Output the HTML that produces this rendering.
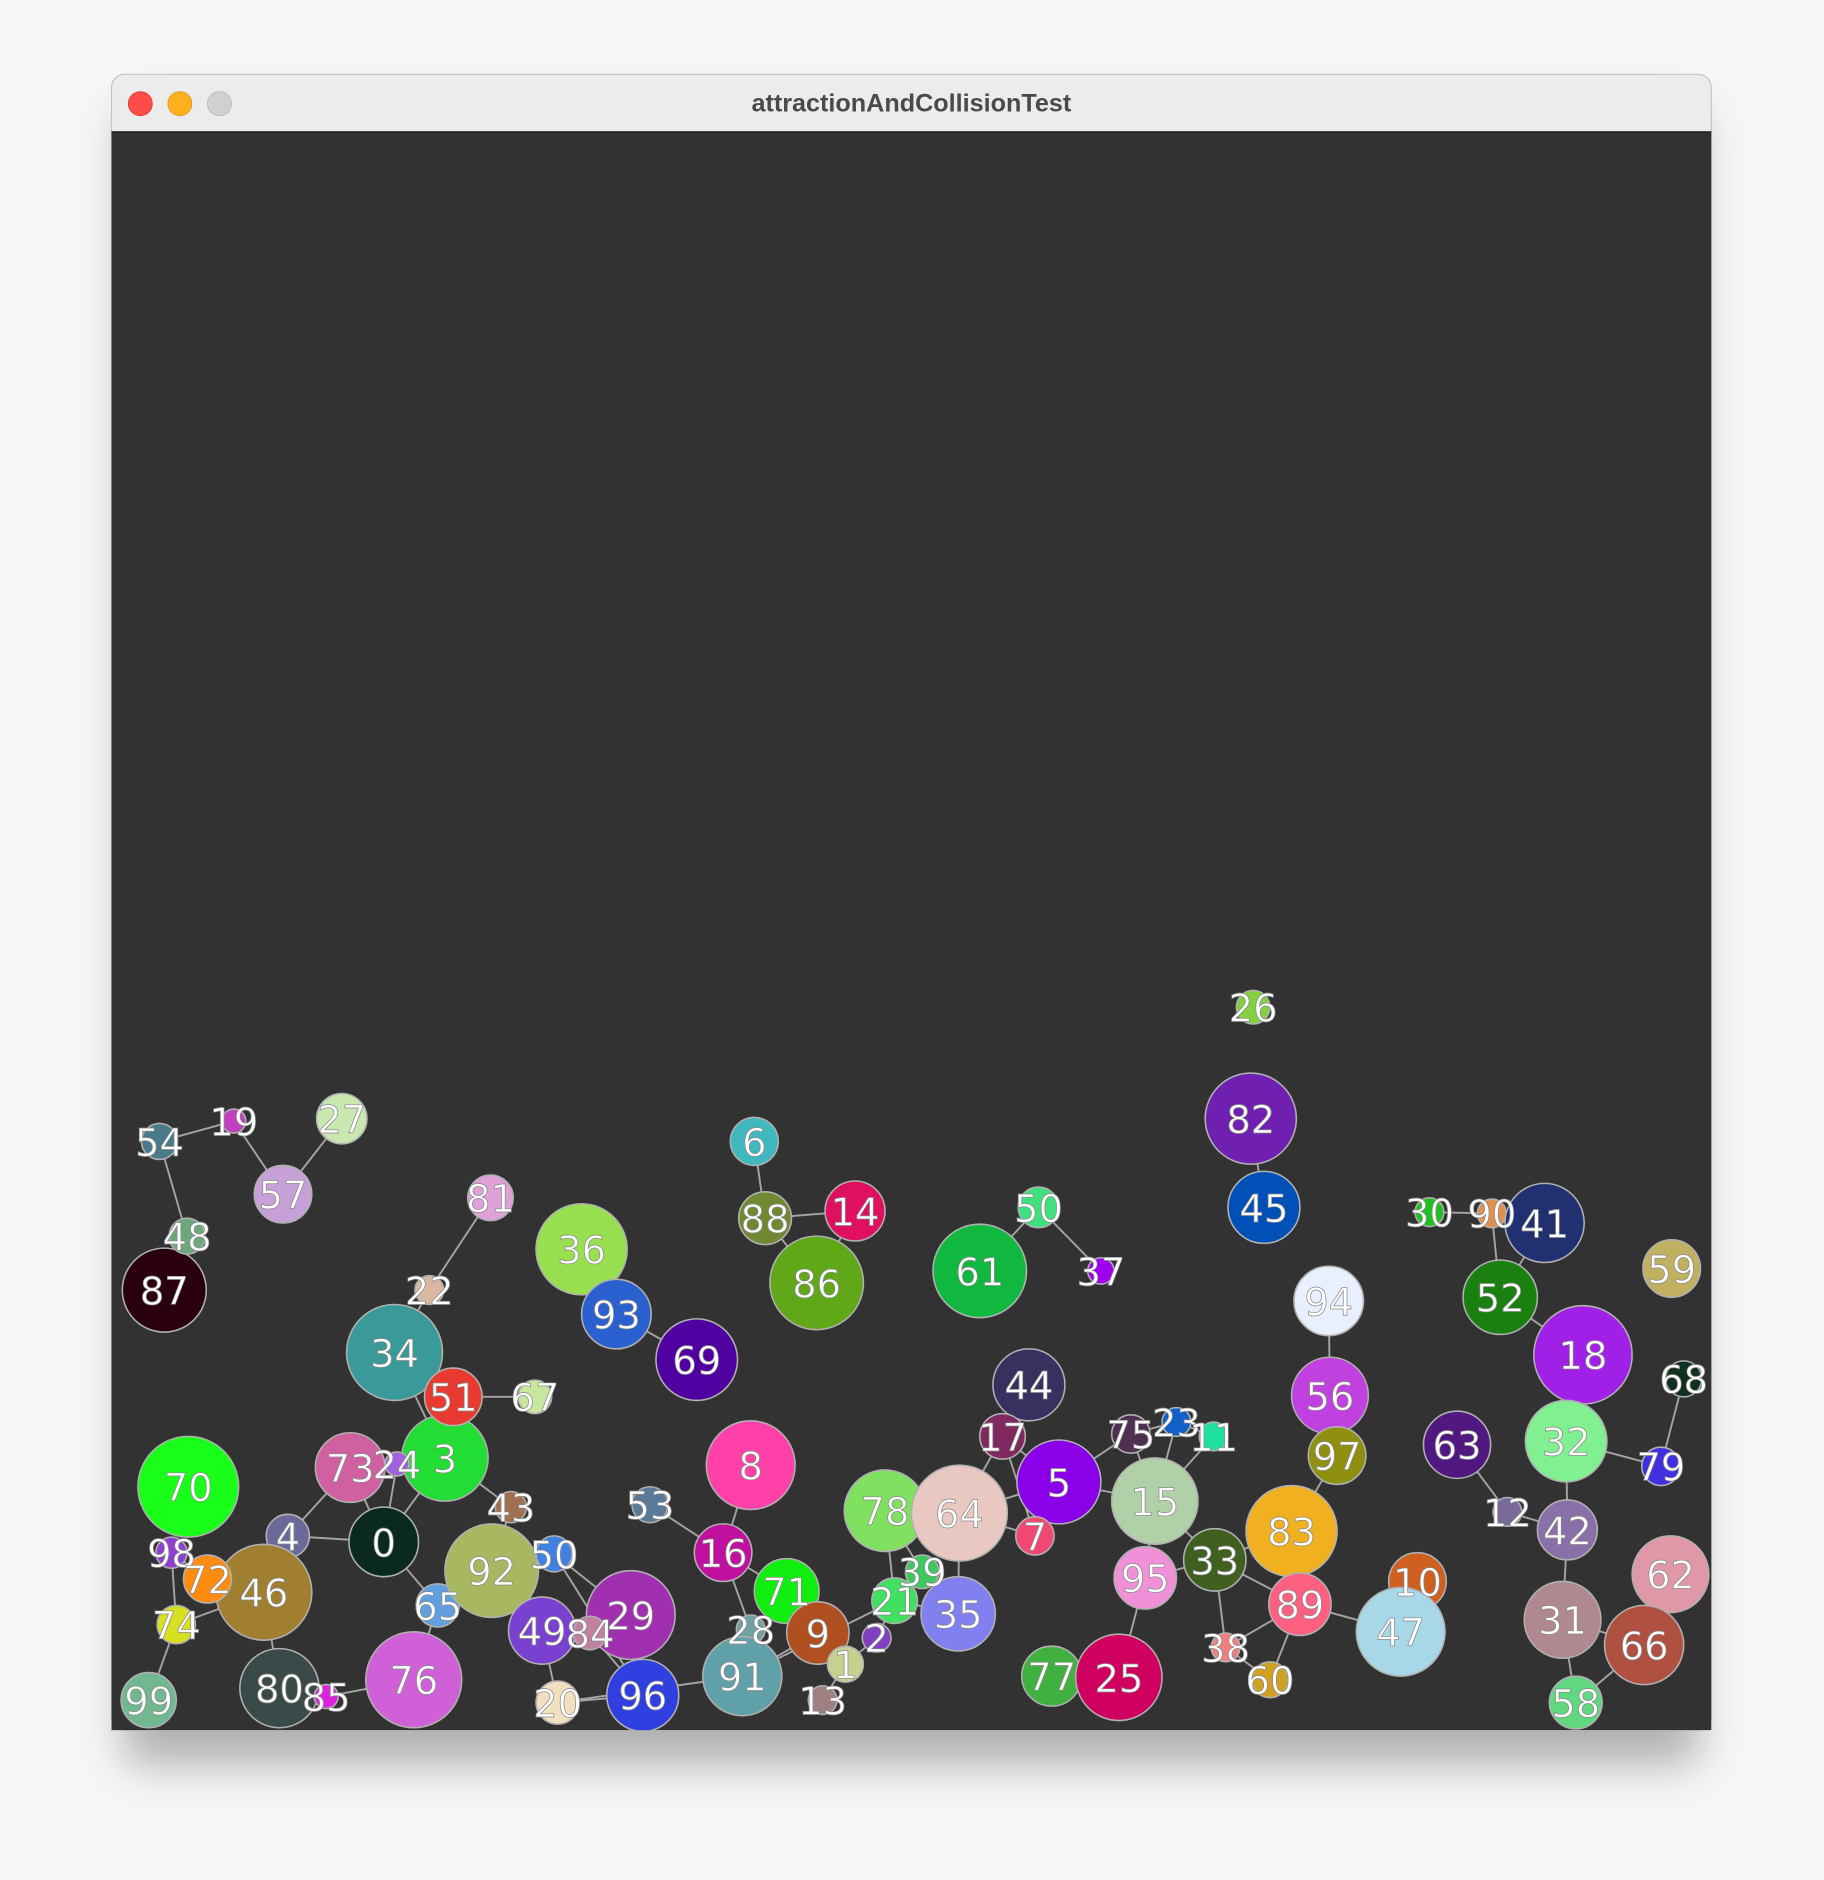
<!DOCTYPE html>
<html><head><meta charset="utf-8"><style>
html,body{margin:0;padding:0;background:#f6f6f6;}
svg{display:block;}
</style></head><body>
<svg width="1824" height="1880" viewBox="0 0 1521 1568" preserveAspectRatio="none" xmlns="http://www.w3.org/2000/svg">
<defs>
<filter id="sh" x="-10%" y="-10%" width="120%" height="125%"><feGaussianBlur stdDeviation="18"/></filter>
<clipPath id="win"><rect x="93" y="110" width="1334" height="1333"/></clipPath>
</defs>
<rect x="0" y="0" width="1527" height="1574" fill="#f6f6f6"/>
<rect x="103" y="92" width="1314" height="1380" rx="14" fill="#000" opacity="0.28" filter="url(#sh)"/>
<rect x="93" y="62" width="1334" height="1381" rx="11" fill="#ececec" stroke="#c4c4c4" stroke-width="1"/>
<rect x="93" y="110" width="1334" height="1333" fill="#323232"/>
<line x1="93" y1="110" x2="1427" y2="110" stroke="#111" stroke-width="1"/>
<circle cx="117" cy="86.5" r="10" fill="#fe4d49" stroke="#df3b37" stroke-width="0.7"/>
<circle cx="150" cy="86.5" r="10" fill="#feb11c" stroke="#e09a17" stroke-width="0.7"/>
<circle cx="183" cy="86.5" r="10" fill="#d0d0d0" stroke="#b8b8b8" stroke-width="0.7"/>
<text x="760" y="93" text-anchor="middle" font-family="Liberation Sans, sans-serif" font-weight="bold" font-size="21" fill="#4a4a4a">attractionAndCollisionTest</text>
<g clip-path="url(#win)">
<g stroke="#b8b8b8" stroke-width="1.6" fill="none" opacity="0.85">
<path d="M137 1076L156 1031L133 952L195 935L236 996L285 933M409 999L358 1076L329 1128L378 1165L446 1165M378 1165L371 1216L329 1128M371 1216L331 1221L292 1224L320 1286L331 1221M292 1224L240 1281L220 1328L173 1317L143 1295L147 1355L124 1418M240 1281L320 1286L365 1339L345 1401L272 1415L233 1408L220 1328M147 1355L220 1328M320 1286L371 1216M410 1310L426 1257L371 1216M410 1310L462 1296L536 1414L465 1420L452 1360L526 1347L492 1362L536 1414M462 1296L526 1347M410 1310L452 1360M465 1420L619 1398L682 1362L705 1388L686 1418M485 1042L514 1096L581 1134M542 1255L603 1295L626 1222M603 1295L656 1327L682 1362M603 1295L626 1359L619 1398M629 952L638 1016L713 1010L681 1070L638 1016M738 1260L800 1262L799 1346L769 1311L746 1335L731 1366L705 1388M738 1260L769 1311L799 1346M738 1260L746 1335M619 1398L746 1335L799 1346M817 1060L866 1007L918 1060M858 1155L836 1198L883 1236L863 1281L836 1198L800 1262L883 1236L963 1252L943 1196L883 1236M800 1262L863 1281M943 1196L981 1186L1012 1198L963 1252L981 1186M963 1252L955 1316L933 1399L877 1398M963 1252L1013 1301L1022 1374L1059 1401L1084 1338L1022 1374M1013 1301L1077 1277L1115 1214L1109 1164L1108 1085M1013 1301L955 1316M1013 1301L1084 1338L1168 1361L1182 1319M1077 1277L1084 1338L1059 1401M1043 933L1054 1007M1192 1011L1244 1012L1288 1020L1251 1082L1244 1012M1251 1082L1320 1130L1306 1202L1307 1276L1303 1351L1314 1420L1371 1372L1393 1313M1215 1205L1257 1261L1307 1276M1303 1351L1371 1372M1404 1150L1385 1223L1306 1202"/>
</g>
<g stroke="#b0b0b0" stroke-width="1.3" fill-opacity="1">
<circle cx="137" cy="1076" r="35" fill="#2a0010"/>
<circle cx="156" cy="1031" r="15" fill="#6da87a"/>
<circle cx="133" cy="952" r="15" fill="#4a7a8a"/>
<circle cx="195" cy="935" r="10" fill="#c040c0"/>
<circle cx="285" cy="933" r="21" fill="#c8e8b0"/>
<circle cx="236" cy="996" r="24" fill="#c8a0d8"/>
<circle cx="409" cy="999" r="19" fill="#e0a0d8"/>
<circle cx="358" cy="1076" r="12" fill="#d8b8a0"/>
<circle cx="329" cy="1128" r="40" fill="#3a9a9a"/>
<circle cx="446" cy="1165" r="14" fill="#c8e8a0"/>
<circle cx="371" cy="1216" r="36" fill="#22dd33"/>
<circle cx="378" cy="1165" r="24" fill="#e83a30"/>
<circle cx="331" cy="1221" r="10" fill="#a060e0"/>
<circle cx="292" cy="1224" r="29" fill="#d060a0"/>
<circle cx="157" cy="1240" r="42" fill="#1aff1a"/>
<circle cx="240" cy="1281" r="18" fill="#6a6a9a"/>
<circle cx="320" cy="1286" r="29" fill="#0a2a20"/>
<circle cx="143" cy="1295" r="13" fill="#9040d0"/>
<circle cx="220" cy="1328" r="40" fill="#a08030"/>
<circle cx="173" cy="1317" r="20" fill="#ff8c10"/>
<circle cx="147" cy="1355" r="16" fill="#d8e020"/>
<circle cx="124" cy="1418" r="23" fill="#70b890"/>
<circle cx="233" cy="1408" r="33" fill="#3a4a48"/>
<circle cx="272" cy="1415" r="10" fill="#e020e0"/>
<circle cx="345" cy="1401" r="40" fill="#d060d8"/>
<circle cx="365" cy="1339" r="18" fill="#60a0e0"/>
<circle cx="410" cy="1310" r="39" fill="#a8b860"/>
<circle cx="426" cy="1257" r="13" fill="#a07050"/>
<circle cx="462" cy="1296" r="15" fill="#4080e0"/>
<circle cx="452" cy="1360" r="28" fill="#7a40d0"/>
<circle cx="526" cy="1347" r="37" fill="#a030b0"/>
<circle cx="492" cy="1362" r="14" fill="#c080a0"/>
<circle cx="465" cy="1420" r="18" fill="#f0e0c0"/>
<circle cx="536" cy="1414" r="30" fill="#3040e0"/>
<circle cx="485" cy="1042" r="38" fill="#98e050"/>
<circle cx="514" cy="1096" r="29" fill="#2a60d0"/>
<circle cx="581" cy="1134" r="34" fill="#5000a0"/>
<circle cx="542" cy="1255" r="15" fill="#5a7a9a"/>
<circle cx="626" cy="1222" r="37" fill="#ff40a8"/>
<circle cx="603" cy="1295" r="24" fill="#c010a0"/>
<circle cx="656" cy="1327" r="27" fill="#10ee10"/>
<circle cx="626" cy="1359" r="12" fill="#70a0a0"/>
<circle cx="619" cy="1398" r="33" fill="#60a0a8"/>
<circle cx="682" cy="1362" r="26" fill="#b05020"/>
<circle cx="705" cy="1388" r="15" fill="#c8d090"/>
<circle cx="686" cy="1418" r="12" fill="#a08080"/>
<circle cx="731" cy="1366" r="12" fill="#8040c0"/>
<circle cx="629" cy="952" r="20" fill="#40b8c0"/>
<circle cx="638" cy="1016" r="22" fill="#708830"/>
<circle cx="713" cy="1010" r="25" fill="#e01060"/>
<circle cx="681" cy="1070" r="39" fill="#60a818"/>
<circle cx="738" cy="1260" r="34" fill="#80e060"/>
<circle cx="800" cy="1262" r="40" fill="#e8c8c0"/>
<circle cx="769" cy="1311" r="14" fill="#40c860"/>
<circle cx="746" cy="1335" r="19" fill="#40e060"/>
<circle cx="799" cy="1346" r="31" fill="#8080f0"/>
<circle cx="817" cy="1060" r="39" fill="#10b840"/>
<circle cx="866" cy="1007" r="17" fill="#40e080"/>
<circle cx="918" cy="1060" r="11" fill="#a000f0"/>
<circle cx="858" cy="1155" r="30" fill="#3a3060"/>
<circle cx="836" cy="1198" r="19" fill="#802860"/>
<circle cx="883" cy="1236" r="35" fill="#8a00e8"/>
<circle cx="863" cy="1281" r="16" fill="#f04870"/>
<circle cx="943" cy="1196" r="16" fill="#503050"/>
<circle cx="963" cy="1252" r="36" fill="#b0d0a8"/>
<circle cx="981" cy="1186" r="12" fill="#1060c8"/>
<circle cx="1012" cy="1198" r="12" fill="#20e0a0"/>
<circle cx="1045" cy="840" r="14" fill="#80d040"/>
<circle cx="1043" cy="933" r="38" fill="#7020b0"/>
<circle cx="1054" cy="1007" r="30" fill="#0050b8"/>
<circle cx="1108" cy="1085" r="29" fill="#e8f0ff"/>
<circle cx="1109" cy="1164" r="32" fill="#c040e0"/>
<circle cx="1115" cy="1214" r="24" fill="#909010"/>
<circle cx="1077" cy="1277" r="38" fill="#f0b020"/>
<circle cx="1013" cy="1301" r="26" fill="#406020"/>
<circle cx="955" cy="1316" r="26" fill="#f090d8"/>
<circle cx="1084" cy="1338" r="26" fill="#ff6080"/>
<circle cx="1022" cy="1374" r="12" fill="#f08080"/>
<circle cx="1059" cy="1401" r="15" fill="#d0a020"/>
<circle cx="877" cy="1398" r="25" fill="#40b040"/>
<circle cx="933" cy="1399" r="36" fill="#d00060"/>
<circle cx="1182" cy="1319" r="24" fill="#d06020"/>
<circle cx="1168" cy="1361" r="37" fill="#a8d8e8"/>
<circle cx="1192" cy="1011" r="12" fill="#20c020"/>
<circle cx="1244" cy="1012" r="12" fill="#e09050"/>
<circle cx="1288" cy="1020" r="33" fill="#203070"/>
<circle cx="1251" cy="1082" r="31" fill="#1a8010"/>
<circle cx="1394" cy="1058" r="24" fill="#c0b060"/>
<circle cx="1320" cy="1130" r="41" fill="#a020e8"/>
<circle cx="1404" cy="1150" r="15" fill="#103020"/>
<circle cx="1215" cy="1205" r="28" fill="#501880"/>
<circle cx="1306" cy="1202" r="34" fill="#80f090"/>
<circle cx="1385" cy="1223" r="16" fill="#4030e0"/>
<circle cx="1257" cy="1261" r="12" fill="#7a6a9a"/>
<circle cx="1307" cy="1276" r="25" fill="#8a70a8"/>
<circle cx="1393" cy="1313" r="32" fill="#e098a8"/>
<circle cx="1303" cy="1351" r="32" fill="#b08890"/>
<circle cx="1371" cy="1372" r="33" fill="#b05040"/>
<circle cx="1314" cy="1420" r="22" fill="#60d880"/>
</g>
<g font-family="DejaVu Sans, sans-serif" font-size="32" fill="#fff" text-anchor="middle" stroke="#888" stroke-width="0.6">
<text x="137" y="1088">87</text><text x="156" y="1043">48</text><text x="133" y="964">54</text><text x="195" y="947">19</text>
<text x="285" y="945">27</text><text x="236" y="1008">57</text><text x="409" y="1011">81</text><text x="358" y="1088">22</text>
<text x="329" y="1140">34</text><text x="446" y="1177">67</text><text x="371" y="1228">3</text><text x="378" y="1177">51</text>
<text x="331" y="1233">24</text><text x="292" y="1236">73</text><text x="157" y="1252">70</text><text x="240" y="1293">4</text>
<text x="320" y="1298">0</text><text x="143" y="1307">98</text><text x="220" y="1340">46</text><text x="173" y="1329">72</text>
<text x="147" y="1367">74</text><text x="124" y="1430">99</text><text x="233" y="1420">80</text><text x="272" y="1427">85</text>
<text x="345" y="1413">76</text><text x="365" y="1351">65</text><text x="410" y="1322">92</text><text x="426" y="1269">43</text>
<text x="462" y="1308">50</text><text x="452" y="1372">49</text><text x="526" y="1359">29</text><text x="492" y="1374">84</text>
<text x="465" y="1432">20</text><text x="536" y="1426">96</text><text x="485" y="1054">36</text><text x="514" y="1108">93</text>
<text x="581" y="1146">69</text><text x="542" y="1267">53</text><text x="626" y="1234">8</text><text x="603" y="1307">16</text>
<text x="656" y="1339">71</text><text x="626" y="1371">28</text><text x="619" y="1410">91</text><text x="682" y="1374">9</text>
<text x="705" y="1400">1</text><text x="686" y="1430">13</text><text x="731" y="1378">2</text><text x="629" y="964">6</text>
<text x="638" y="1028">88</text><text x="713" y="1022">14</text><text x="681" y="1082">86</text><text x="738" y="1272">78</text>
<text x="800" y="1274">64</text><text x="769" y="1323">39</text><text x="746" y="1347">21</text><text x="799" y="1358">35</text>
<text x="817" y="1072">61</text><text x="866" y="1019">50</text><text x="918" y="1072">37</text><text x="858" y="1167">44</text>
<text x="836" y="1210">17</text><text x="883" y="1248">5</text><text x="863" y="1293">7</text><text x="943" y="1208">75</text>
<text x="963" y="1264">15</text><text x="981" y="1198">23</text><text x="1012" y="1210">11</text><text x="1045" y="852">26</text>
<text x="1043" y="945">82</text><text x="1054" y="1019">45</text><text x="1108" y="1097">94</text><text x="1109" y="1176">56</text>
<text x="1115" y="1226">97</text><text x="1077" y="1289">83</text><text x="1013" y="1313">33</text><text x="955" y="1328">95</text>
<text x="1084" y="1350">89</text><text x="1022" y="1386">38</text><text x="1059" y="1413">60</text><text x="877" y="1410">77</text>
<text x="933" y="1411">25</text><text x="1182" y="1331">10</text><text x="1168" y="1373">47</text><text x="1192" y="1023">30</text>
<text x="1244" y="1024">90</text><text x="1288" y="1032">41</text><text x="1251" y="1094">52</text><text x="1394" y="1070">59</text>
<text x="1320" y="1142">18</text><text x="1404" y="1162">68</text><text x="1215" y="1217">63</text><text x="1306" y="1214">32</text>
<text x="1385" y="1235">79</text><text x="1257" y="1273">12</text><text x="1307" y="1288">42</text><text x="1393" y="1325">62</text>
<text x="1303" y="1363">31</text><text x="1371" y="1384">66</text><text x="1314" y="1432">58</text>
</g>
</g>
</svg>
</body></html>
